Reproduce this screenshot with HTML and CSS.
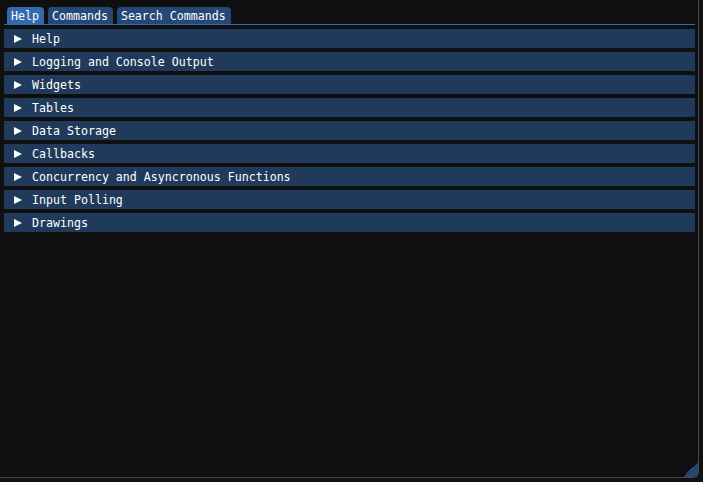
FILE: index.html
```html
<!DOCTYPE html>
<html>
<head>
<meta charset="utf-8">
<link rel="stylesheet" href="styles.css">
</head>
<body>
<div class="window">
  <div class="tabs">
    <div class="tab active">Help</div>
    <div class="tab">Commands</div>
    <div class="tab">Search Commands</div>
  </div>
  <div class="tabline"></div>
  <div class="headers">
    <div class="header"><span class="arrow"></span><span class="label">Help</span></div>
    <div class="header"><span class="arrow"></span><span class="label">Logging and Console Output</span></div>
    <div class="header"><span class="arrow"></span><span class="label">Widgets</span></div>
    <div class="header"><span class="arrow"></span><span class="label">Tables</span></div>
    <div class="header"><span class="arrow"></span><span class="label">Data Storage</span></div>
    <div class="header"><span class="arrow"></span><span class="label">Callbacks</span></div>
    <div class="header"><span class="arrow"></span><span class="label">Concurrency and Asyncronous Functions</span></div>
    <div class="header"><span class="arrow"></span><span class="label">Input Polling</span></div>
    <div class="header"><span class="arrow"></span><span class="label">Drawings</span></div>
  </div>
  <div class="grip"></div>
</div>
</body>
</html>
```

FILE: styles.css
```css
html, body {
  margin: 0;
  padding: 0;
  background: #111111;
}
body {
  width: 703px;
  height: 482px;
  overflow: hidden;
  font-family: "DejaVu Sans Mono", "Liberation Mono", monospace;
  font-size: 11.62px;
  color: #ffffff;
}
.window {
  position: relative;
  box-sizing: border-box;
  width: 699px;
  height: 478px;
  background: #0f0f0f;
  border-right: 1px solid #45454c;
  border-bottom: 1px solid #45454c;
  border-bottom-right-radius: 6px;
  overflow: hidden;
  padding: 7px 3px 0 4px;
}
.tabs {
  display: flex;
  gap: 4px;
  margin-left: 3px;
  height: 17px;
}
.tab {
  box-sizing: border-box;
  height: 17px;
  padding: 1px 5px 0 4px;
  line-height: 16px;
  background: #264876;
  border-radius: 4px 4px 0 0;
  white-space: pre;
}
.tab.active {
  background: #3369ad;
}
.tabline {
  height: 1px;
  background: #3369ad;
}
.headers {
  display: flex;
  flex-direction: column;
  gap: 4px;
  margin-top: 4px;
}
.header {
  box-sizing: border-box;
  height: 19px;
  padding-top: 1px;
  line-height: 18px;
  background: #1f3a5a;
  display: flex;
  align-items: center;
  white-space: pre;
}
.arrow {
  width: 0;
  height: 0;
  margin-left: 10px;
  margin-right: 10px;
  margin-top: -1px;
  border-left: 8px solid #ffffff;
  border-top: 4.5px solid transparent;
  border-bottom: 4.5px solid transparent;
}
.grip {
  position: absolute;
  right: 0;
  bottom: 0;
  width: 15px;
  height: 15px;
  background: linear-gradient(to top left, #25476f 50%, transparent 50%);
}
```
